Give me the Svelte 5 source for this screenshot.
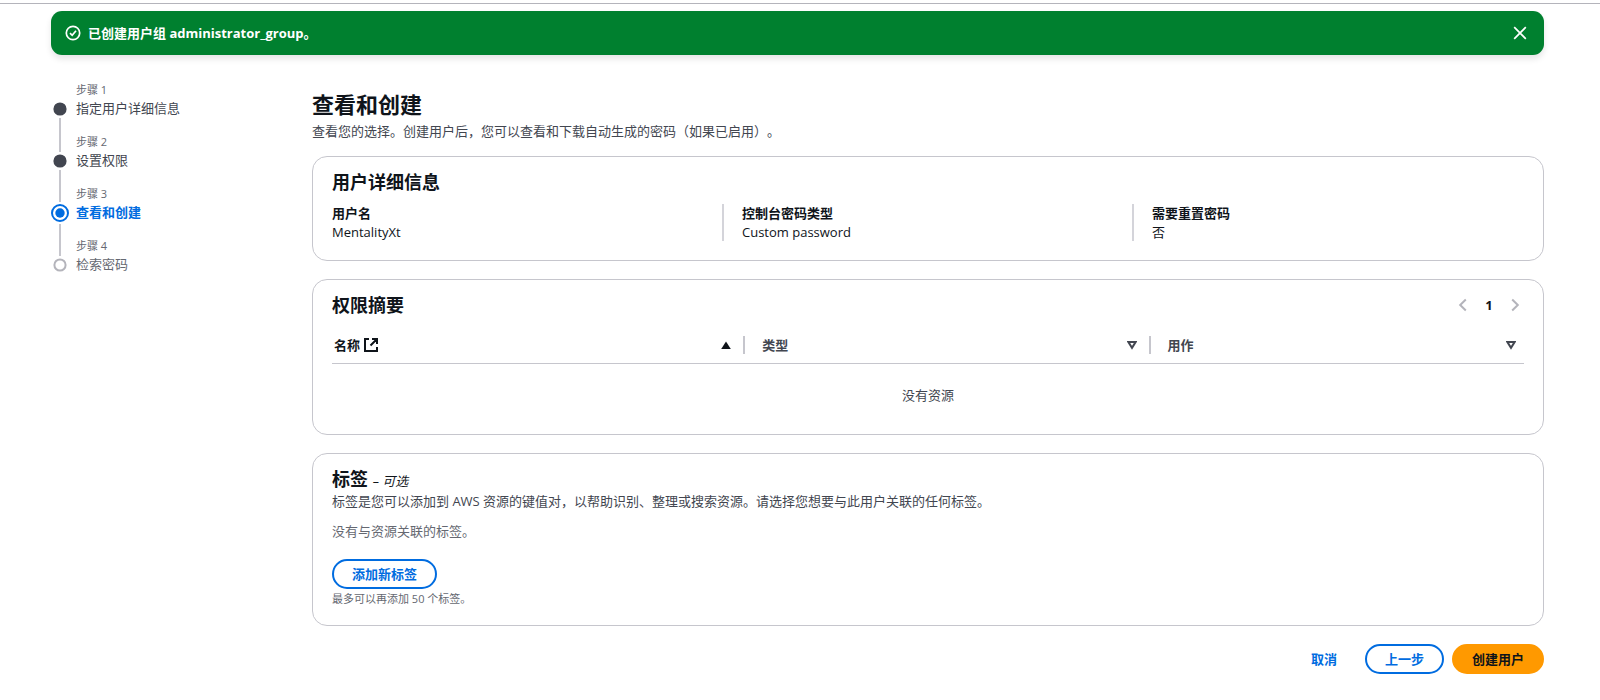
<script>
    // Wizard steps
    const steps = [
        { title: "指定用户详细信息", status: "done" },
        { title: "设置权限", status: "done" },
        { title: "查看和创建", status: "current" },
        { title: "检索密码", status: "todo" },
    ];

    const details = [
        { label: "用户名", value: "MentalityXt" },
        { label: "控制台密码类型", value: "Custom password" },
        { label: "需要重置密码", value: "否" },
    ];

    const columns = [
        { key: "name", label: "名称", external: true },
        { key: "type", label: "类型" },
        { key: "usedAs", label: "用作" },
    ];

    let sortKey = $state("name");
    let showFlash = $state(true);
</script>

<div class="page">
    <div class="topline"></div>

    <!-- Success message -->
    {#if showFlash}
        <div class="flash" role="status">
            <svg class="icon thin" width="16" height="16" viewBox="0 0 16 16">
                <circle cx="8" cy="8" r="6.7" />
                <path d="M5 8.2 7.2 10.3 11 5.8" />
            </svg>
            <span class="flash-text">已创建用户组 administrator_group。</span>
            <button class="dismiss" aria-label="关闭" onclick={() => (showFlash = false)}>
                <svg class="icon thin" width="16" height="16" viewBox="0 0 16 16">
                    <path d="M2.2 2.2 13.8 13.8M13.8 2.2 2.2 13.8" />
                </svg>
            </button>
        </div>
    {/if}

    <div class="layout">
        <!-- Steps -->
        <nav>
            <ol class="steps">
                {#each steps as step, i (step.title)}
                    <li class={step.status}>
                        <div class="track">
                            <span class="line before"></span>
                            {#if step.status === "current"}
                                <svg width="22" height="22" viewBox="0 0 22 22">
                                    <circle class="ring" cx="11" cy="11" r="8" />
                                    <circle class="dot" cx="11" cy="11" r="4.7" />
                                </svg>
                            {:else}
                                <svg width="18" height="18" viewBox="0 0 18 18">
                                    <circle class="mark" cx="9" cy="9" r="5.6" />
                                </svg>
                            {/if}
                            <span class="line after"></span>
                        </div>
                        <div>
                            <div class="small">步骤 {i + 1}</div>
                            <div class="step-title">{step.title}</div>
                        </div>
                    </li>
                {/each}
            </ol>
        </nav>

        <main>
            <header class="page-head">
                <h1>查看和创建</h1>
                <p>查看您的选择。创建用户后，您可以查看和下载自动生成的密码（如果已启用）。</p>
            </header>

            <!-- User details -->
            <section class="card">
                <h2>用户详细信息</h2>
                <dl class="details">
                    {#each details as item (item.label)}
                        <div>
                            <dt>{item.label}</dt>
                            <dd>{item.value}</dd>
                        </div>
                    {/each}
                </dl>
            </section>

            <!-- Permissions -->
            <section class="card table-card">
                <div class="card-head">
                    <h2>权限摘要</h2>
                    <div class="pagination">
                        <button aria-label="上一页" disabled>
                            <svg class="icon" width="14" height="14" viewBox="0 0 14 14">
                                <path d="M9.8 1.5 4.2 7l5.6 5.5" />
                            </svg>
                        </button>
                        <button class="current-page">1</button>
                        <button aria-label="下一页" disabled>
                            <svg class="icon" width="14" height="14" viewBox="0 0 14 14">
                                <path d="M4.2 1.5 9.8 7l-5.6 5.5" />
                            </svg>
                        </button>
                    </div>
                </div>
                <table>
                    <thead>
                        <tr>
                            {#each columns as column (column.key)}
                                <th class={column.key}>
                                    <button class="sort" onclick={() => (sortKey = column.key)}>
                                        <span>{column.label}</span>
                                        {#if column.external}
                                            <svg class="icon" width="14" height="14" viewBox="0 0 14 14">
                                                <path d="M5 1H1v12h12V9M8 1h5v5M13 1 6.5 7.5" />
                                            </svg>
                                        {/if}
                                        <svg class="caret" width="10" height="10" viewBox="0 0 10 10">
                                            {#if sortKey === column.key}
                                                <path class="filled" d="M5 1.4 9.8 9H.2z" />
                                            {:else}
                                                <path d="M1.4 2h7.2L5 7.8z" />
                                            {/if}
                                        </svg>
                                    </button>
                                </th>
                            {/each}
                        </tr>
                    </thead>
                    <tbody>
                        <tr>
                            <td colspan="3">没有资源</td>
                        </tr>
                    </tbody>
                </table>
            </section>

            <!-- Tags -->
            <section class="card">
                <h2>标签 <i>– 可选</i></h2>
                <p class="description">
                    标签是您可以添加到 AWS 资源的键值对，以帮助识别、整理或搜索资源。请选择您想要与此用户关联的任何标签。
                </p>
                <p class="no-tags">没有与资源关联的标签。</p>
                <button class="btn">添加新标签</button>
                <div class="small limit">最多可以再添加 50 个标签。</div>
            </section>

            <div class="actions">
                <button class="btn link">取消</button>
                <button class="btn">上一步</button>
                <button class="btn primary">创建用户</button>
            </div>
        </main>
    </div>
</div>

<style>
    :global(body) {
        margin: 0;
        background: #fff;
    }

    .page {
        font-family: "Open Sans", "Noto Sans CJK SC", sans-serif;
        font-size: 13px;
        line-height: 18px;
        text-spacing-trim: space-all;
        color: #0f141a;
        padding-bottom: 26px;
    }

    .topline {
        height: 3px;
        border-bottom: 1px solid #b4b4bb;
    }

    h1, h2, p, dl, dd, ol {
        margin: 0;
        padding: 0;
    }

    button {
        font: inherit;
        color: inherit;
        background: none;
        border: 0;
        padding: 0;
        cursor: pointer;
    }

    .icon {
        flex: none;
        fill: none;
        stroke: currentColor;
        stroke-width: 2;
    }

    .icon.thin {
        stroke-width: 1.7;
    }

    /* Flash message */
    .flash {
        display: flex;
        align-items: center;
        gap: 7px;
        height: 44px;
        margin: 7px 56px 0 51px;
        padding: 0 16px 0 14px;
        box-sizing: border-box;
        border-radius: 11px;
        background: #00802f;
        color: #fff;
        font-weight: 700;
        box-shadow: 0 4px 6px rgba(0, 7, 22, 0.1);
    }

    .flash-text {
        flex: 1;
    }

    .dismiss {
        display: flex;
    }

    .layout {
        display: grid;
        grid-template-columns: 242px 1fr;
        gap: 19px;
        padding: 26px 56px 0 51px;
    }

    /* Steps */
    .steps {
        list-style: none;
    }

    .steps li {
        display: flex;
        gap: 7px;
        height: 52px;
        color: #424650;
    }

    .track {
        display: flex;
        flex-direction: column;
        align-items: center;
        width: 18px;
    }

    .track svg {
        flex: none;
    }

    .line {
        width: 2px;
        background: #c6c6cd;
    }

    .before {
        height: 19px;
    }

    .current .before {
        height: 17px;
    }

    .after {
        flex: 1;
    }

    li:first-child .before,
    li:last-child .after {
        background: none;
    }

    .mark {
        fill: #424650;
        stroke: #424650;
        stroke-width: 2;
    }

    .todo .mark {
        fill: #fff;
        stroke: #b4b4bb;
    }

    .ring {
        fill: none;
        stroke: #006ce0;
        stroke-width: 2;
    }

    .dot {
        fill: #006ce0;
    }

    .small {
        font-size: 11px;
        color: #656871;
    }

    .current .step-title {
        color: #006ce0;
        font-weight: 700;
    }

    .todo .step-title {
        color: #656871;
    }

    .page-head {
        padding: 10px 0 16px;
    }

    .page-head p {
        margin-top: 5px;
        color: #424650;
    }

    h1 {
        font-size: 22px;
        line-height: 26px;
    }

    h2 {
        font-size: 18px;
        line-height: 22px;
    }

    h2 i {
        font-size: 13px;
        font-weight: 400;
        line-height: 13px;
    }

    /* Cards */
    .card {
        border: 1px solid #c6c6cd;
        border-radius: 15px;
        padding: 14px 19px 17px;
        margin-bottom: 18px;
    }

    .table-card {
        padding-bottom: 8px;
    }

    .details {
        display: grid;
        grid-template-columns: repeat(3, 1fr);
        gap: 38px;
        margin-top: 11px;
        padding-bottom: 2px;
    }

    .details div + div {
        border-left: 2px solid #d4d4da;
        margin-left: -20px;
        padding-left: 18px;
    }

    dt {
        margin-bottom: 1px;
        font-weight: 700;
    }

    .card-head {
        display: flex;
        justify-content: space-between;
        align-items: center;
    }

    .pagination {
        display: flex;
        align-items: center;
        gap: 12px;
        padding-right: 2px;
        color: #b4b4bb;
    }

    .pagination button {
        display: flex;
        justify-content: center;
        width: 14px;
    }

    .pagination .current-page {
        color: #0f141a;
        font-weight: 700;
    }

    table {
        width: 100%;
        margin-top: 11px;
        border-collapse: collapse;
        table-layout: fixed;
    }

    th {
        height: 36px;
        padding: 0;
        border-bottom: 1px solid #c6c6cd;
        color: #424650;
    }

    .name {
        width: 34.5%;
        color: #0f141a;
    }

    .type {
        width: 34%;
    }

    .sort {
        display: flex;
        align-items: center;
        gap: 4px;
        width: 100%;
        padding: 0 8px 0 17px;
        border-left: 2px solid #c6c6cd;
        font-weight: 700;
    }

    .name .sort {
        padding-left: 2px;
        border-left: 0;
    }

    th:not(:last-child) .sort {
        padding-right: 12px;
    }

    .caret {
        margin-left: auto;
        fill: none;
        stroke: currentColor;
        stroke-width: 2;
    }

    .caret .filled {
        fill: currentColor;
        stroke: none;
    }

    td {
        height: 62px;
        padding: 0;
        text-align: center;
        vertical-align: middle;
        color: #424650;
    }

    .description {
        margin-top: 2px;
        color: #424650;
    }

    .no-tags {
        margin: 12px 0 19px;
        color: #656871;
    }

    .limit {
        margin-top: 1px;
    }

    /* Buttons */
    .btn {
        display: block;
        height: 30px;
        padding: 0 18px;
        border: 2px solid #006ce0;
        border-radius: 15px;
        color: #006ce0;
        font-weight: 700;
        line-height: 18px;
    }

    .btn.link {
        border-color: transparent;
    }

    .btn.primary {
        background: #ff9900;
        border-color: #ff9900;
        color: #0f141a;
    }

    .actions {
        display: flex;
        justify-content: flex-end;
        gap: 8px;
    }
</style>
